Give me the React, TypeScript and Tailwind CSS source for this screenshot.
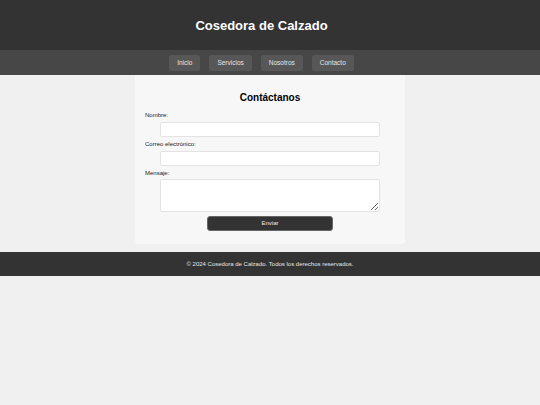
// Contact page for the shoe repair shop

const navLinks = ["Inicio", "Servicios", "Nosotros", "Contacto"];

export default function App() {
  return (
    <div className="min-h-screen bg-[#f0f0f0] font-['Liberation_Sans',Arial,sans-serif]">
      {/* Header */}
      <header className="h-[50px] bg-[#333333] flex items-center justify-center pr-[17px]">
        <h1 className="text-white text-[13px] leading-none font-bold">Cosedora de Calzado</h1>
      </header>

      {/* Nav */}
      <nav className="h-[25px] bg-[#474747] flex items-center justify-center gap-[9px] pt-px pr-[17px]">
        {navLinks.map((link) => (
          <a
            key={link}
            href="#"
            className="h-4 px-2 flex items-center rounded-[2px] bg-[#575757] text-[#e6e6e6] text-[6.5px]"
          >
            {link}
          </a>
        ))}
      </nav>

      {/* Contact form */}
      <main className="w-[270px] mx-auto bg-[#f7f7f7] rounded-b-[4px] px-[10px] pt-[17px] pb-[13px]">
        <h2 className="text-center text-[10px] leading-[12px] font-bold text-black mb-2">
          Contáctanos
        </h2>
        <form className="flex flex-col" onSubmit={(e) => e.preventDefault()}>
          <label className="text-[6px] leading-[7px] text-[#222] mb-[2.5px]">Nombre:</label>
          <input
            type="text"
            className="self-center w-[220px] h-[15px] bg-white border border-[#e3e3e3] rounded-[2px] mb-[4.5px]"
          />
          <label className="text-[6px] leading-[7px] text-[#222] mb-[2.5px]">Correo electrónico:</label>
          <input
            type="email"
            className="self-center w-[220px] h-[15px] bg-white border border-[#e3e3e3] rounded-[2px] mb-[4.5px]"
          />
          <label className="text-[6px] leading-[7px] text-[#222] mb-[2px]">Mensaje:</label>
          <textarea className="self-center w-[220px] h-[33px] bg-white border border-[#e3e3e3] rounded-[2px] mb-1" />
          <button
            type="submit"
            className="self-center w-[126px] h-[15px] bg-[#333333] border border-[#666] rounded-[3px] text-[#eeeeee] text-[6px] font-normal"
          >
            Enviar
          </button>
        </form>
      </main>

      {/* Footer */}
      <footer className="mt-2 h-6 bg-[#333333] flex items-center justify-center">
        <p className="text-[#e6e6e6] text-[6px]">© 2024 Cosedora de Calzado. Todos los derechos reservados.</p>
      </footer>
    </div>
  );
}
